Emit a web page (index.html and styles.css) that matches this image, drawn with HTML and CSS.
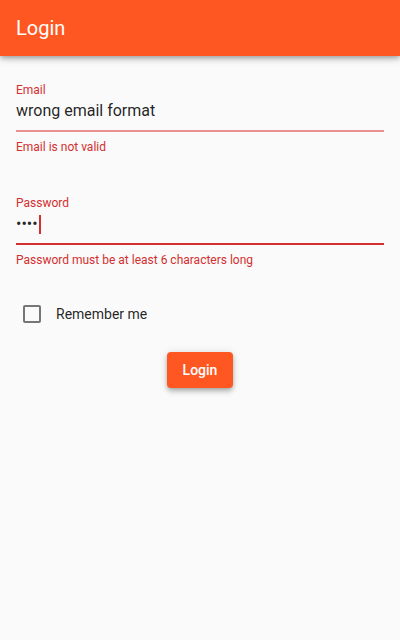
FILE: index.html
```html
<!DOCTYPE html>
<html lang="en">
<head>
<meta charset="utf-8">
<title>Login</title>
<link rel="stylesheet" href="styles.css">
</head>
<body>
<header class="appbar"><h1 class="appbar-title">Login</h1></header>
<main class="form">
  <div class="field field-email">
    <label class="field-label">Email</label>
    <div class="field-input field-input-faded">wrong email format</div>
    <div class="field-error">Email is not valid</div>
  </div>
  <div class="field field-password">
    <label class="field-label">Password</label>
    <div class="field-input field-input-focused"><span class="dots">••••</span><span class="cursor"></span></div>
    <div class="field-error">Password must be at least 6 characters long</div>
  </div>
  <div class="remember">
    <span class="checkbox"></span>
    <span class="remember-text">Remember me</span>
  </div>
  <div class="actions">
    <button class="btn">Login</button>
  </div>
</main>
</body>
</html>
```
FILE: styles.css
```css
* { box-sizing: border-box; }
html, body { margin: 0; padding: 0; }
body {
  width: 400px;
  height: 640px;
  background: #fafafa;
  font-family: Roboto, "Noto Sans", sans-serif;
  color: #212121;
  overflow: hidden;
}
.appbar {
  height: 56px;
  background: #ff5722;
  display: flex;
  align-items: center;
  padding-left: 16px;
  box-shadow: 0 2px 4px -1px rgba(0,0,0,.2), 0 4px 5px 0 rgba(0,0,0,.14), 0 1px 10px 0 rgba(0,0,0,.12);
  position: relative;
}
.appbar-title {
  margin: 0;
  color: #fff;
  font-size: 20px;
  font-weight: 400;
  line-height: 24px;
}
.form {
  padding: 26px 16px 0;
  display: flex;
  flex-direction: column;
}
.field-password { margin-top: 40px; }
.field-label {
  display: block;
  font-size: 12px;
  line-height: 16px;
  color: #d32f2f;
  margin-bottom: 3px;
}
.field-input {
  font-size: 16px;
  line-height: 20px;
  height: 31px;
  padding-bottom: 9px;
  color: rgba(0,0,0,.87);
  display: flex;
  align-items: center;
}
.field-input-faded { border-bottom: 2px solid #e99090; }
.field-input-focused { border-bottom: 2px solid #d32f2f; }
.cursor {
  display: inline-block;
  width: 2px;
  height: 19px;
  background: #d32f2f;
  margin-left: 1px;
}
.field-error {
  margin-top: 7px;
  font-size: 12px;
  line-height: 16px;
  color: #d32f2f;
}
.remember {
  margin-top: 37px;
  margin-left: 7px;
  height: 18px;
  display: flex;
  align-items: center;
}
.checkbox {
  width: 18px;
  height: 18px;
  border: 2px solid #757575;
  border-radius: 2px;
}
.remember-text {
  margin-left: 15px;
  font-size: 14px;
  line-height: 18px;
  color: rgba(0,0,0,.87);
}
.actions {
  margin-top: 29px;
  display: flex;
  justify-content: center;
}
.btn {
  height: 36px;
  padding: 0 16px;
  border: none;
  border-radius: 4px;
  background: #ff5722;
  color: #fff;
  font-family: Roboto, sans-serif;
  font-size: 14px;
  font-weight: 500;
  box-shadow: 0 2px 4px -1px rgba(0,0,0,.2), 0 4px 5px 0 rgba(0,0,0,.14), 0 1px 10px 0 rgba(0,0,0,.12);
}
```
